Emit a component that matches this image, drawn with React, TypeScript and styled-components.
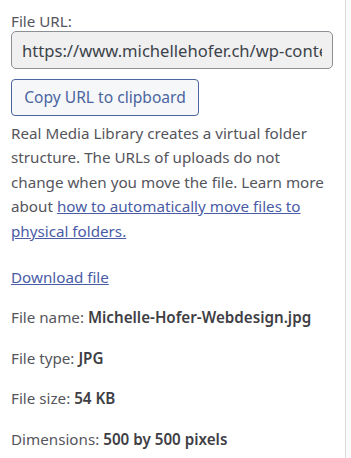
import React from "react";
import styled, { createGlobalStyle } from "styled-components";

const Global = createGlobalStyle`
  html, body { margin: 0; padding: 0; background: #ffffff; }
  body { font-family: "Noto Sans", "Open Sans", sans-serif; }
`;

const Page = styled.div`
  display: flex;
  width: 351px;
  height: 458px;
  overflow: hidden;
`;

const Panel = styled.div`
  width: 346px;
  box-sizing: border-box;
  padding: 11px 12px 0 11px;
  border-right: 1px solid #dcdcde;
  color: #55555c;
  font-size: 15.2px;
  line-height: 24.4px;
`;

const Gutter = styled.div`
  flex: 1;
  background: #fbfbfb;
`;

const Label = styled.label`
  display: block;
  line-height: 20px;
  margin: 0;
`;

const UrlInput = styled.input`
  display: block;
  box-sizing: border-box;
  width: 322px;
  height: 38px;
  margin: 0;
  padding: 0 10px;
  border: 1px solid #8c8f94;
  border-radius: 5px;
  background: #f0f0f1;
  color: #3c434a;
  font: inherit;
  font-size: 16.6px;
  outline: none;
`;

const CopyButton = styled.button`
  display: block;
  box-sizing: border-box;
  margin: 10px 0 0;
  width: 188px;
  height: 37px;
  padding: 0;
  border: 1px solid #4a65a0;
  border-radius: 4px;
  background: #f6f7f9;
  color: #4a65a0;
  font: inherit;
  font-size: 15.6px;
  cursor: pointer;
`;

const Description = styled.p`
  margin: 5px 0 0;
`;

const Link = styled.a`
  color: #4a5ca6;
  text-decoration: underline;
`;

const DownloadRow = styled.div`
  margin-top: 22px;
`;

const InfoRow = styled.div`
  margin-top: 16px;
`;

const Strong = styled.strong`
  font-weight: 600;
  color: #3e3e44;
`;

const rows: [string, string][] = [
  ["File name:", "Michelle-Hofer-Webdesign.jpg"],
  ["File type:", "JPG"],
  ["File size:", "54 KB"],
  ["Dimensions:", "500 by 500 pixels"],
];

export default function App() {
  return (
    <Page>
      <Global />
      <Panel>
        <Label htmlFor="file-url">File URL:</Label>
        <UrlInput
          id="file-url"
          readOnly
          value="https://www.michellehofer.ch/wp-content/uploads/Michelle-Hofer-Webdesign.jpg"
        />
        <CopyButton type="button">Copy URL to clipboard</CopyButton>
        <Description>
          Real Media Library creates a virtual folder structure. The URLs of uploads do not
          change when you move the file. Learn more about{" "}
          <Link href="#">how to automatically move files to physical folders.</Link>
        </Description>
        <DownloadRow>
          <Link href="#">Download file</Link>
        </DownloadRow>
        {rows.map(([k, v]) => (
          <InfoRow key={k}>
            {k} <Strong>{v}</Strong>
          </InfoRow>
        ))}
      </Panel>
      <Gutter />
    </Page>
  );
}
